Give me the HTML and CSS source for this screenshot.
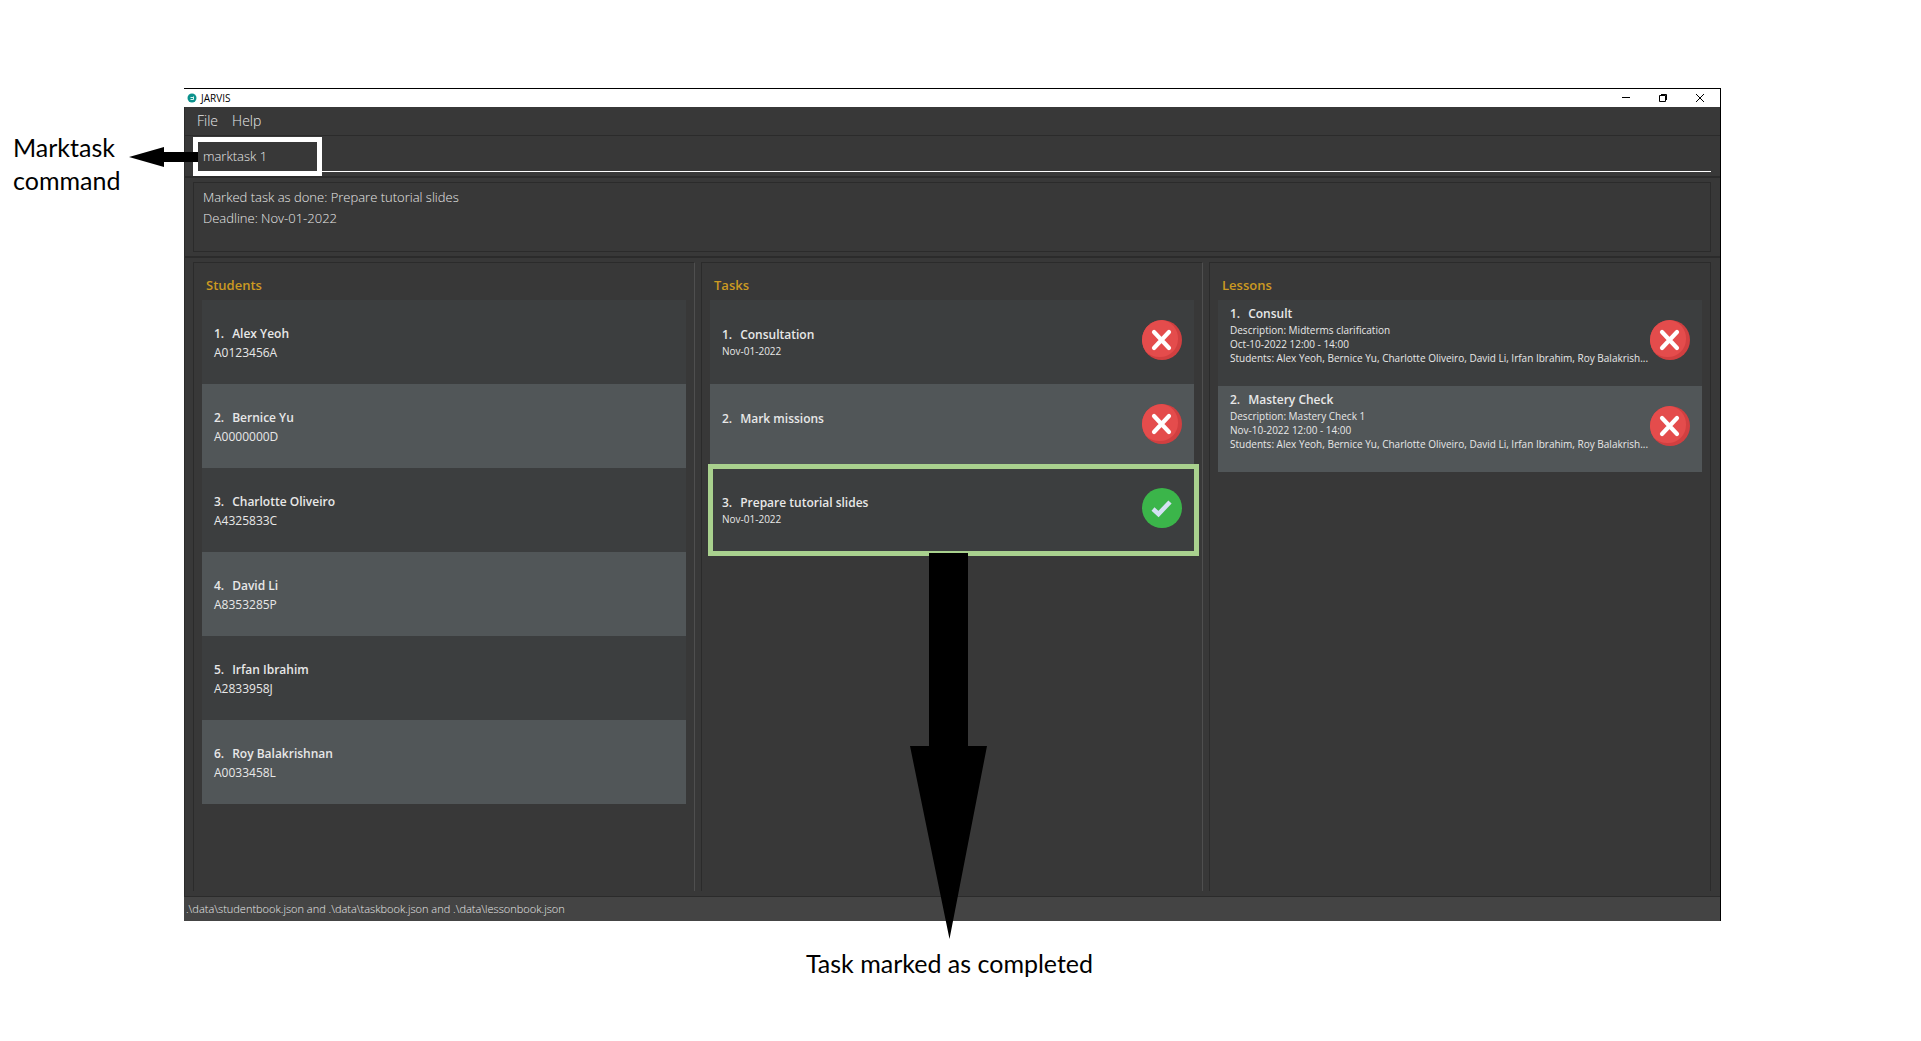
FILE: index.html
```html
<!DOCTYPE html>
<html lang="en">
<head>
<meta charset="utf-8">
<title>JARVIS</title>
<link rel="stylesheet" href="styles.css">
</head>
<body>
<svg class="symbols" aria-hidden="true">
  <symbol id="cross" viewBox="0 0 40 40">
    <circle cx="20" cy="20" r="20" fill="#d13f40"/>
    <path d="M20 0A18 18.500 0 0 1 36 19A18 18 0 0 1 18 37A20 20 0 0 1 4 32A20 20 0 0 1 20 0Z" fill="#e44c4c"/>
    <path d="M12 12L27 28M27 12L12 28" stroke="#fff" stroke-width="4.200" stroke-linecap="round"/>
  </symbol>
  <symbol id="check" viewBox="0 0 40 40">
    <circle cx="20" cy="20" r="20" fill="#3bb54a"/>
    <path d="M11 21L16.500 26L28 14" fill="none" stroke="#d4e1f4" stroke-width="4.500"/>
  </symbol>
</svg>
<main class="page">
  <aside class="note">Marktask command</aside>
  <section class="window">
    <header class="titlebar">
      <svg class="logo" viewBox="0 0 10 10" aria-hidden="true"><circle cx="5" cy="5" r="4.500" fill="#0b918c"/><path d="M3.500 6.500h3V3.500M3.500 4.500h3" stroke="#d8f2ef" fill="none"/></svg>
      <span class="app-name">JARVIS</span>
      <button class="control" aria-label="Minimize"><svg viewBox="0 0 10 10"><path d="M1 4.500h8"/></svg></button>
      <button class="control" aria-label="Restore"><svg viewBox="0 0 10 10"><path d="M1.500 2.500h6v6h-6zM3 1.500h5.500V7"/></svg></button>
      <button class="control" aria-label="Close"><svg viewBox="0 0 10 10"><path d="M1 1l8 8M9 1l-8 8"/></svg></button>
    </header>
    <nav class="menubar">
      <button class="menu">File</button>
      <button class="menu">Help</button>
    </nav>
    <div class="command">
      <input class="command-input" type="text" value="marktask 1" aria-label="Command">
      <div class="command-mark"></div>
      <svg class="arrow-left" viewBox="0 0 69 20" aria-hidden="true"><path d="M0 10L35 0V5H69V15H35V20Z"/></svg>
    </div>
    <div class="result">
      <output class="result-box">Marked task as done: Prepare tutorial slides<br>Deadline: Nov-01-2022</output>
    </div>
    <div class="panels">
      <section class="panel">
        <h2 class="heading">Students</h2>
        <ul class="list">
          <li class="row student"><div class="info"><p class="name"><span class="num">1.</span>Alex Yeoh</p><p class="id">A0123456A</p></div></li>
          <li class="row student"><div class="info"><p class="name"><span class="num">2.</span>Bernice Yu</p><p class="id">A0000000D</p></div></li>
          <li class="row student"><div class="info"><p class="name"><span class="num">3.</span>Charlotte Oliveiro</p><p class="id">A4325833C</p></div></li>
          <li class="row student"><div class="info"><p class="name"><span class="num">4.</span>David Li</p><p class="id">A8353285P</p></div></li>
          <li class="row student"><div class="info"><p class="name"><span class="num">5.</span>Irfan Ibrahim</p><p class="id">A2833958J</p></div></li>
          <li class="row student"><div class="info"><p class="name"><span class="num">6.</span>Roy Balakrishnan</p><p class="id">A0033458L</p></div></li>
        </ul>
      </section>
      <section class="panel">
        <h2 class="heading">Tasks</h2>
        <ul class="list">
          <li class="row task"><div class="info"><p class="name"><span class="num">1.</span>Consultation</p><p class="detail">Nov-01-2022</p></div><svg class="status"><use href="#cross"/></svg></li>
          <li class="row task"><div class="info"><p class="name"><span class="num">2.</span>Mark missions</p></div><svg class="status"><use href="#cross"/></svg></li>
          <li class="row task"><div class="info"><p class="name"><span class="num">3.</span>Prepare tutorial slides</p><p class="detail">Nov-01-2022</p></div><svg class="status"><use href="#check"/></svg>
            <div class="task-mark"></div>
            <svg class="arrow-down" viewBox="0 0 78 386" aria-hidden="true"><path d="M19 0H58V193H77L39.500 386L0 193H19Z"/></svg>
          </li>
        </ul>
      </section>
      <section class="panel">
        <h2 class="heading">Lessons</h2>
        <ul class="list">
          <li class="row lesson"><div class="info"><p class="name"><span class="num">1.</span>Consult</p><p class="detail">Description: Midterms clarification</p><p class="detail">Oct-10-2022 12:00 - 14:00</p><p class="detail">Students: Alex Yeoh, Bernice Yu, Charlotte Oliveiro, David Li, Irfan Ibrahim, Roy Balakrish...</p></div><svg class="status"><use href="#cross"/></svg></li>
          <li class="row lesson"><div class="info"><p class="name"><span class="num">2.</span>Mastery Check</p><p class="detail">Description: Mastery Check 1</p><p class="detail">Nov-10-2022 12:00 - 14:00</p><p class="detail">Students: Alex Yeoh, Bernice Yu, Charlotte Oliveiro, David Li, Irfan Ibrahim, Roy Balakrish...</p></div><svg class="status"><use href="#cross"/></svg></li>
        </ul>
      </section>
    </div>
    <footer class="statusbar">.\data\studentbook.json and .\data\taskbook.json and .\data\lessonbook.json</footer>
  </section>
  <p class="caption">Task marked as completed</p>
</main>
</body>
</html>
```
FILE: styles.css
```css
* { box-sizing: border-box; }
body { margin: 0; background: #fff; font-family: "Open Sans", "Noto Sans", sans-serif; }
p, h2, ul { margin: 0; padding: 0; }
button { border: 0; padding: 0; background: none; font: inherit; color: inherit; }
.symbols { position: absolute; width: 0; height: 0; }

.page { display: grid; grid-template-columns: 184px minmax(0, 1fr) 200px; padding-top: 88px; }
.note, .caption { font-family: Lato, sans-serif; font-size: 25px; line-height: 33px; color: #000; }
.note { padding: 43px 40px 0 13px; }
.caption { grid-column: 2; padding: 26px 6px 0 0; text-align: center; }

.window { border-top: 1px solid #000; border-right: 1px solid #000; background: #383838; color: #e8e8e8; }
.titlebar { display: flex; align-items: center; height: 18px; padding: 0 8px 0 3px; background: #fff; color: #000; }
.logo { width: 10px; height: 10px; }
.app-name { flex: 1; margin-left: 4px; font-size: 10px; line-height: 18px; }
.control { display: grid; place-items: center; width: 24px; height: 18px; margin-left: 13px; }
.control svg { width: 10px; height: 10px; fill: none; stroke: #000; stroke-width: 1; }

.menubar { display: flex; gap: 14px; height: 29px; padding-left: 12px; border-bottom: 1px solid #2b2b2b; border-left: 1px solid #2b2b2b; }
.menu { font-size: 14px; font-weight: 300; line-height: 28px; }

.command { position: relative; height: 42px; padding: 0 9px; border-bottom: 2px solid #2b2b2b; border-left: 1px solid #2b2b2b; }
.command-input { display: block; width: 100%; height: 36px; padding: 4px 0 0 9px; border: 0; border-bottom: 1px solid #fff; background: none; color: #e8e8e8; font-family: inherit; font-size: 13px; font-weight: 300; outline: 0; }
.command-mark { position: absolute; top: 1px; left: 8px; width: 129px; height: 39px; border: 5px solid #fff; }
.arrow-left { position: absolute; top: 11px; left: -56px; width: 69px; height: 20px; }

.result { padding: 4px 9px 4px 8px; border-bottom: 2px solid #2b2b2b; border-left: 1px solid #2b2b2b; }
.result-box { display: block; height: 70px; padding: 4px 9px; border: 1px solid #2b2b2b; font-size: 13px; font-weight: 300; line-height: 21px; }

.panels { display: grid; grid-template-columns: repeat(3, minmax(0, 1fr)); gap: 6px; min-height: 638px; padding: 4px 9px 5px 8px; border-left: 1px solid #2b2b2b; }
.panel { padding: 0 8px; border: 1px solid #2b2b2b; border-bottom: 0; border-right-color: #4f4f4f; }
.panel:last-child { border-right-color: #2b2b2b; }
.heading { padding: 8px 4px 1px; font-size: 13px; font-weight: 600; line-height: 28px; color: #cc9a22; }
.list { list-style: none; }
.row { position: relative; display: flex; height: 84px; padding: 0 12px; background: #3c3e3f; }
.row:nth-child(even) { background: #515658; }
.student { padding-top: 25px; }
.task .info { padding-top: 26px; }
.lesson { height: 86px; }
.lesson .info { padding-top: 5px; }
.info { flex: 1; min-width: 0; }
.name { font-size: 12px; font-weight: 600; line-height: 18px; }
.num { margin-right: 8px; }
.id { font-size: 12px; line-height: 19px; }
.detail { font-size: 10px; line-height: 14px; white-space: nowrap; }
.status { flex: none; width: 40px; height: 40px; margin-top: 20px; }

.task-mark { position: absolute; top: -4px; right: -5px; bottom: -4px; left: -2px; border: 5px solid #a9d18e; }
.arrow-down { position: absolute; z-index: 1; top: 85px; left: 200px; width: 78px; height: 386px; }

.statusbar { padding-left: 2px; border-top: 1px solid #2b2b2b; background: #444; font-size: 11px; font-weight: 300; line-height: 24px; }
```
